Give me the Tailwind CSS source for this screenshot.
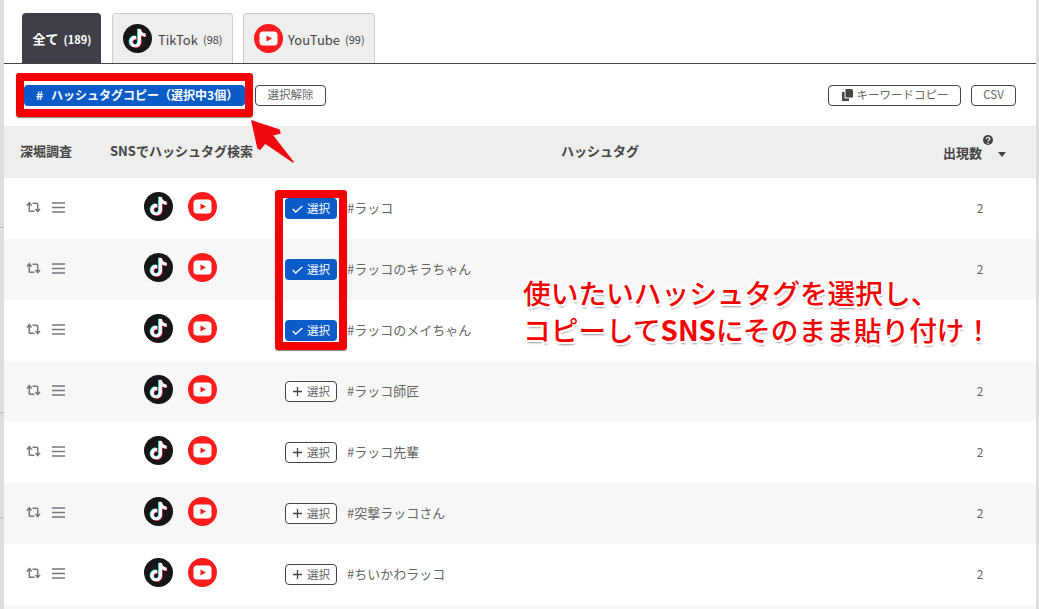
<!DOCTYPE html>
<html lang="ja">
<head>
    <meta charset="UTF-8">
    <meta name="viewport" content="width=device-width, initial-scale=1.0">
    <title>ハッシュタグ</title>
    <script src="https://cdn.jsdelivr.net/npm/@tailwindcss/browser@4"></script>
</head>
<body class="relative w-[1039px] h-[609px] overflow-hidden bg-[#dedede] font-['Noto_Sans_CJK_JP','Noto_Sans',sans-serif] text-[#555]">

    <!-- shared icons -->
    <svg class="hidden">
        <symbol id="tiktok-note" viewBox="0 0 24 24">
            <path d="M12.525.02c1.31-.02 2.61-.01 3.91-.02.08 1.53.63 3.09 1.75 4.17 1.12 1.11 2.7 1.62 4.24 1.79v4.03c-1.44-.05-2.89-.35-4.2-.97-.57-.26-1.1-.59-1.62-.93-.01 2.92.01 5.84-.02 8.75-.08 1.4-.54 2.79-1.35 3.94-1.31 1.92-3.58 3.17-5.91 3.21-1.43.08-2.86-.31-4.08-1.03-2.02-1.19-3.44-3.37-3.65-5.71-.02-.5-.03-1-.01-1.49.18-1.9 1.12-3.72 2.58-4.96 1.66-1.44 3.98-2.13 6.15-1.72.02 1.48-.04 2.96-.04 4.44-.99-.32-2.15-.23-3.02.37-.63.41-1.11 1.04-1.36 1.75-.21.51-.15 1.07-.14 1.61.24 1.64 1.82 3.02 3.5 2.87 1.12-.01 2.19-.66 2.77-1.61.19-.33.4-.67.41-1.06.1-1.79.06-3.57.07-5.36.01-4.03-.01-8.05.02-12.07z"/>
        </symbol>
        <symbol id="tiktok" viewBox="0 0 29 29">
            <circle cx="14.5" cy="14.5" r="14.5" fill="#161616"/>
            <use href="#tiktok-note" x="4.500" y="4.600" width="18.500" height="18.500" fill="#25f4ee"/>
            <use href="#tiktok-note" x="5.900" y="5.400" width="18.500" height="18.500" fill="#fe2c55"/>
            <use href="#tiktok-note" x="5.200" y="5" width="18.500" height="18.500" fill="#fff"/>
        </symbol>
        <symbol id="youtube" viewBox="0 0 29 29">
            <circle cx="14.5" cy="14.5" r="14.5" fill="#fe1c1c"/>
            <rect x="5.5" y="7.5" width="18" height="14" rx="3.5" fill="#fff"/>
            <path d="M12.5 11.5l5.5 3-5.5 3z" fill="#fe1c1c"/>
        </symbol>
        <symbol id="retweet" viewBox="0 0 16 12">
            <path d="M3.500 11V2.500M1 4.500l2.500-3 2.500 3M7 2h4.500q1 0 1 1v6.500M10 8l2.500 3L15 8M9 10.500H4.500q-1 0-1-1" fill="none" stroke="#77777f" stroke-width="1.600"/>
        </symbol>
        <symbol id="bars" viewBox="0 0 13 11">
            <path d="M0 1h13M0 5.500h13M0 10h13" stroke="#77777f" stroke-width="1.300"/>
        </symbol>
    </svg>

    <!-- bits of the page behind, showing in the left margin -->
    <div class="absolute left-0 top-[227px] w-[4px] h-px bg-[#bbb]"></div>
    <div class="absolute left-0 top-[412px] w-[4px] h-px bg-[#bbb]"></div>
    <div class="absolute left-0 top-[517px] w-[4px] h-px bg-[#bbb]"></div>

    <main class="ml-[4px] mr-[3px] h-full bg-white">
        <!-- tabs -->
        <nav class="flex h-[64px] pt-[13px] pl-[18px] border-b border-[#444] items-stretch">
            <a class="w-[79px] pt-[2px] pl-[1px] rounded-t-[4px] bg-[#3f3f47] text-white font-bold text-[13px] flex items-center justify-center gap-[5px]">全て <span class="text-[11px]">(189)</span></a>
            <a class="ml-[11px] w-[121px] rounded-t-[4px] border border-b-0 border-[#ccc] bg-[#eee] text-[#444] text-[13px] flex items-center pl-[10px]">
                <svg class="w-[29px] h-[29px]"><use href="#tiktok"/></svg>
                <span class="ml-[6px] mt-[2px]">TikTok</span><span class="ml-[5px] mt-[2px] text-[11px]">(98)</span>
            </a>
            <a class="ml-[10px] w-[132px] rounded-t-[4px] border border-b-0 border-[#ccc] bg-[#eee] text-[#444] text-[13px] flex items-center pl-[10px]">
                <svg class="w-[29px] h-[29px]"><use href="#youtube"/></svg>
                <span class="ml-[5px] mt-[2px]">YouTube</span><span class="ml-[5px] mt-[2px] text-[11px]">(99)</span>
            </a>
        </nav>

        <!-- toolbar -->
        <div class="flex items-center h-[62px] pl-[20px] pr-[20px]">
            <button class="w-[221px] h-[21px] rounded-[4px] bg-[#0b5cc9] text-white font-bold text-[12px] flex items-center pl-[12px] whitespace-nowrap">
                <span class="text-[12px] mr-[8px]">#</span>ハッシュタグコピー（選択中3個）
            </button>
            <button class="ml-[10px] w-[71px] h-[21px] rounded-[4px] border border-[#444] bg-white text-[11.5px] text-[#666]">選択解除</button>
            <button class="ml-auto w-[133px] h-[21px] pl-[1px] rounded-[4px] border border-[#444] bg-white text-[11.5px] text-[#666] flex items-center justify-center gap-[4px]">
                <svg class="w-[11px] h-[12px]" viewBox="0 0 11 12"><path d="M3.500 0h5.500a2 2 0 0 1 2 2v6.500H3.500zM0 3h2.500v6.500H7V12H0z" fill="#444"/></svg>
                キーワードコピー
            </button>
            <button class="ml-[10px] w-[45px] h-[21px] rounded-[4px] border border-[#444] bg-white text-[11.5px] text-[#666]">CSV</button>
        </div>

        <!-- table header -->
        <div class="flex items-center h-[52px] pb-[2px] bg-[#eee] text-[#444] font-bold text-[13px]">
            <div class="w-[106px] pl-[16px]">深堀調査</div>
            <div class="w-[190px] whitespace-nowrap">SNSでハッシュタグ検索</div>
            <div class="w-[600px] text-center">ハッシュタグ</div>
            <div class="ml-[43px] flex items-start">
                <span class="mt-[3px]">出現数</span>
                <svg class="ml-[1px] -mt-[5px] w-[10px] h-[10px]" viewBox="0 0 10 10"><circle cx="5" cy="5" r="5" fill="#444"/><path d="M3.300 4a1.700 1.500 0 1 1 2.600 1.200Q5 5.800 5 6.300" fill="none" stroke="#fff" stroke-width="1.200"/><circle cx="5" cy="8" r=".8" fill="#fff"/></svg>
                <svg class="ml-[5px] mt-[12px] w-[8px] h-[5px]" viewBox="0 0 8 5"><path d="M0 0h8L4 5z" fill="#444"/></svg>
            </div>
        </div>

        <!-- rows -->
        <div class="flex items-center h-[61px] bg-white text-[13px] text-[#666]">
            <div class="w-[100px] pl-[22px] pb-[3px] flex items-center gap-[11px]"><svg class="w-[15px] h-[12px]"><use href="#retweet"/></svg><svg class="w-[13px] h-[11px]"><use href="#bars"/></svg></div>
            <div class="w-[171px] pl-[40px] pb-[4px] flex gap-[15px]"><svg class="w-[29px] h-[29px]"><use href="#tiktok"/></svg><svg class="w-[29px] h-[29px]"><use href="#youtube"/></svg></div>
            <div class="flex-1 pl-[10px] flex items-center"><button class="w-[52px] h-[21px] pl-[7px] rounded-[4px] bg-[#0b5cc9] text-white text-[11.5px] flex items-center gap-[4px]"><svg class="w-[11px] h-[8px]" viewBox="0 0 11 8"><path d="M.7 4l3 3L10.300 1" fill="none" stroke="#fff" stroke-width="1.300"/></svg>選択</button><span class="ml-[10px] -mt-[2px]">#ラッコ</span></div>
            <div class="w-[110px] pr-[2px] pb-[2px] text-center text-[12px]">2</div>
        </div>
        <div class="flex items-center h-[61px] bg-[#f7f7f7] text-[13px] text-[#666]">
            <div class="w-[100px] pl-[22px] pb-[3px] flex items-center gap-[11px]"><svg class="w-[15px] h-[12px]"><use href="#retweet"/></svg><svg class="w-[13px] h-[11px]"><use href="#bars"/></svg></div>
            <div class="w-[171px] pl-[40px] pb-[4px] flex gap-[15px]"><svg class="w-[29px] h-[29px]"><use href="#tiktok"/></svg><svg class="w-[29px] h-[29px]"><use href="#youtube"/></svg></div>
            <div class="flex-1 pl-[10px] flex items-center"><button class="w-[52px] h-[21px] pl-[7px] rounded-[4px] bg-[#0b5cc9] text-white text-[11.5px] flex items-center gap-[4px]"><svg class="w-[11px] h-[8px]" viewBox="0 0 11 8"><path d="M.7 4l3 3L10.300 1" fill="none" stroke="#fff" stroke-width="1.300"/></svg>選択</button><span class="ml-[10px] -mt-[2px]">#ラッコのキラちゃん</span></div>
            <div class="w-[110px] pr-[2px] pb-[2px] text-center text-[12px]">2</div>
        </div>
        <div class="flex items-center h-[61px] bg-white text-[13px] text-[#666]">
            <div class="w-[100px] pl-[22px] pb-[3px] flex items-center gap-[11px]"><svg class="w-[15px] h-[12px]"><use href="#retweet"/></svg><svg class="w-[13px] h-[11px]"><use href="#bars"/></svg></div>
            <div class="w-[171px] pl-[40px] pb-[4px] flex gap-[15px]"><svg class="w-[29px] h-[29px]"><use href="#tiktok"/></svg><svg class="w-[29px] h-[29px]"><use href="#youtube"/></svg></div>
            <div class="flex-1 pl-[10px] flex items-center"><button class="w-[52px] h-[21px] pl-[7px] rounded-[4px] bg-[#0b5cc9] text-white text-[11.5px] flex items-center gap-[4px]"><svg class="w-[11px] h-[8px]" viewBox="0 0 11 8"><path d="M.7 4l3 3L10.300 1" fill="none" stroke="#fff" stroke-width="1.300"/></svg>選択</button><span class="ml-[10px] -mt-[2px]">#ラッコのメイちゃん</span></div>
            <!-- count hidden behind the annotation in the reference -->
            <div class="w-[110px]"></div>
        </div>
        <div class="flex items-center h-[61px] bg-[#f7f7f7] text-[13px] text-[#666]">
            <div class="w-[100px] pl-[22px] pb-[3px] flex items-center gap-[11px]"><svg class="w-[15px] h-[12px]"><use href="#retweet"/></svg><svg class="w-[13px] h-[11px]"><use href="#bars"/></svg></div>
            <div class="w-[171px] pl-[40px] pb-[4px] flex gap-[15px]"><svg class="w-[29px] h-[29px]"><use href="#tiktok"/></svg><svg class="w-[29px] h-[29px]"><use href="#youtube"/></svg></div>
            <div class="flex-1 pl-[10px] flex items-center"><button class="w-[52px] h-[21px] pl-[7px] rounded-[4px] border border-[#444] bg-white text-[11.5px] text-[#666] flex items-center gap-[5px]"><svg class="w-[9px] h-[9px]" viewBox="0 0 9 9"><path d="M4.500 0v9M0 4.500h9" stroke="#444" stroke-width="1.300"/></svg>選択</button><span class="ml-[10px] -mt-[2px]">#ラッコ師匠</span></div>
            <div class="w-[110px] pr-[2px] pb-[2px] text-center text-[12px]">2</div>
        </div>
        <div class="flex items-center h-[61px] bg-white text-[13px] text-[#666]">
            <div class="w-[100px] pl-[22px] pb-[3px] flex items-center gap-[11px]"><svg class="w-[15px] h-[12px]"><use href="#retweet"/></svg><svg class="w-[13px] h-[11px]"><use href="#bars"/></svg></div>
            <div class="w-[171px] pl-[40px] pb-[4px] flex gap-[15px]"><svg class="w-[29px] h-[29px]"><use href="#tiktok"/></svg><svg class="w-[29px] h-[29px]"><use href="#youtube"/></svg></div>
            <div class="flex-1 pl-[10px] flex items-center"><button class="w-[52px] h-[21px] pl-[7px] rounded-[4px] border border-[#444] bg-white text-[11.5px] text-[#666] flex items-center gap-[5px]"><svg class="w-[9px] h-[9px]" viewBox="0 0 9 9"><path d="M4.500 0v9M0 4.500h9" stroke="#444" stroke-width="1.300"/></svg>選択</button><span class="ml-[10px] -mt-[2px]">#ラッコ先輩</span></div>
            <div class="w-[110px] pr-[2px] pb-[2px] text-center text-[12px]">2</div>
        </div>
        <div class="flex items-center h-[61px] bg-[#f7f7f7] text-[13px] text-[#666]">
            <div class="w-[100px] pl-[22px] pb-[3px] flex items-center gap-[11px]"><svg class="w-[15px] h-[12px]"><use href="#retweet"/></svg><svg class="w-[13px] h-[11px]"><use href="#bars"/></svg></div>
            <div class="w-[171px] pl-[40px] pb-[4px] flex gap-[15px]"><svg class="w-[29px] h-[29px]"><use href="#tiktok"/></svg><svg class="w-[29px] h-[29px]"><use href="#youtube"/></svg></div>
            <div class="flex-1 pl-[10px] flex items-center"><button class="w-[52px] h-[21px] pl-[7px] rounded-[4px] border border-[#444] bg-white text-[11.5px] text-[#666] flex items-center gap-[5px]"><svg class="w-[9px] h-[9px]" viewBox="0 0 9 9"><path d="M4.500 0v9M0 4.500h9" stroke="#444" stroke-width="1.300"/></svg>選択</button><span class="ml-[10px] -mt-[2px]">#突撃ラッコさん</span></div>
            <div class="w-[110px] pr-[2px] pb-[2px] text-center text-[12px]">2</div>
        </div>
        <div class="flex items-center h-[61px] bg-white text-[13px] text-[#666]">
            <div class="w-[100px] pl-[22px] pb-[3px] flex items-center gap-[11px]"><svg class="w-[15px] h-[12px]"><use href="#retweet"/></svg><svg class="w-[13px] h-[11px]"><use href="#bars"/></svg></div>
            <div class="w-[171px] pl-[40px] pb-[4px] flex gap-[15px]"><svg class="w-[29px] h-[29px]"><use href="#tiktok"/></svg><svg class="w-[29px] h-[29px]"><use href="#youtube"/></svg></div>
            <div class="flex-1 pl-[10px] flex items-center"><button class="w-[52px] h-[21px] pl-[7px] rounded-[4px] border border-[#444] bg-white text-[11.5px] text-[#666] flex items-center gap-[5px]"><svg class="w-[9px] h-[9px]" viewBox="0 0 9 9"><path d="M4.500 0v9M0 4.500h9" stroke="#444" stroke-width="1.300"/></svg>選択</button><span class="ml-[10px] -mt-[2px]">#ちいかわラッコ</span></div>
            <div class="w-[110px] pr-[2px] pb-[2px] text-center text-[12px]">2</div>
        </div>
        <div class="h-[4px] bg-[#f7f7f7]"></div>
    </main>

    <!-- annotations drawn over the screenshot -->
    <div class="absolute left-[16px] top-[73px] w-[237px] h-[44px] border-[8px] border-[#f50000] rounded-[3px] shadow-[0_1px_1px_#888]"></div>
    <div class="absolute left-[275px] top-[190px] w-[72px] h-[160px] border-[8px] border-[#f50000] rounded-[3px] shadow-[0_1px_1px_#888]"></div>
    <svg class="absolute left-[245px] top-[115px] w-[55px] h-[55px]" viewBox="245 115 55 55">
        <polygon points="252,121 279,130 280,133 272,135 293,162 265,143 260,149 258,148" fill="#f00a10" stroke="#f00a10" stroke-width="1.500" stroke-linejoin="round"/>
    </svg>
    <div class="absolute left-[523px] top-[274px] text-[#f50000] text-[27.7px] leading-[37px] font-medium whitespace-nowrap [text-shadow:-2px_0_0_#fff,2px_0_0_#fff,0_-2px_0_#fff,0_2px_0_#fff,-2px_-2px_0_#fff,2px_-2px_0_#fff,-2px_2px_0_#fff,2px_2px_0_#fff,1px_3px_2px_#999]">
        <div>使いたいハッシュタグを選択し、</div>
        <div>コピーして<span class="font-bold">SNS</span>にそのまま貼り付け！</div>
    </div>

</body>
</html>
